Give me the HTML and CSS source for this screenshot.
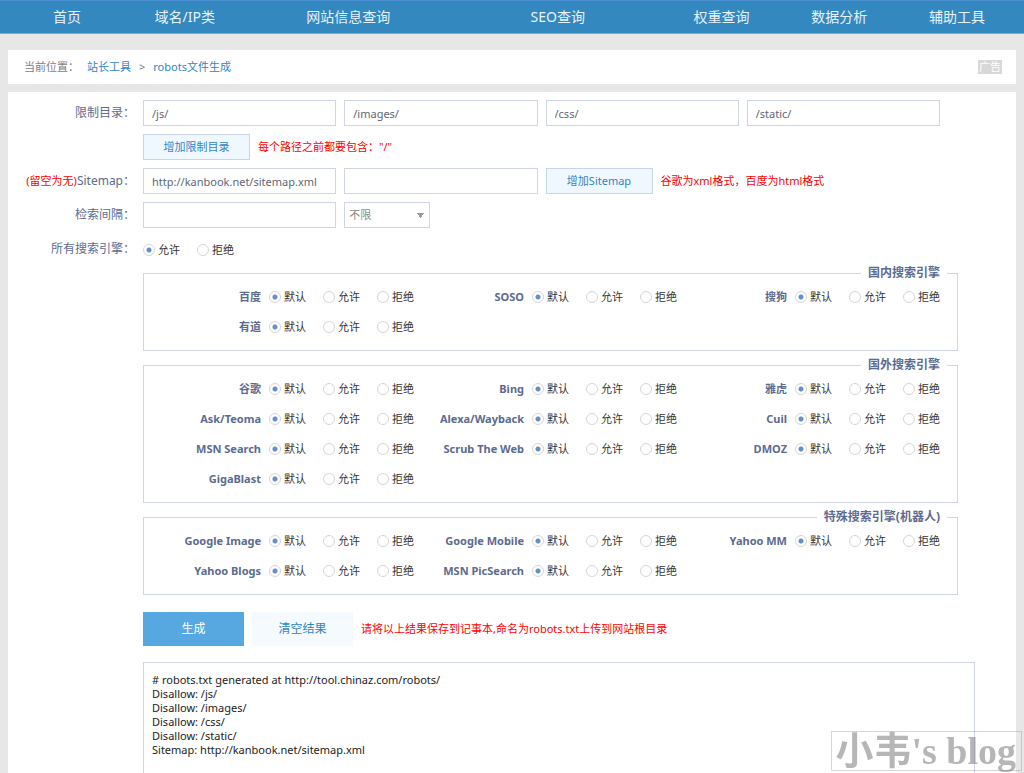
FILE: index.html
```html
<!DOCTYPE html>
<html lang="zh-CN">
<head>
<meta charset="utf-8">
<title>robots文件生成</title>
<link rel="stylesheet" href="styles.css">
</head>
<body>
<nav class="nav">
  <a href="#">首页</a>
  <a href="#">域名/IP类</a>
  <a href="#">网站信息查询</a>
  <a href="#">SEO查询</a>
  <a href="#">权重查询</a>
  <a href="#">数据分析</a>
  <a href="#">辅助工具</a>
</nav>
<div class="crumbs">
  <span>当前位置：</span>
  <a href="#">站长工具</a>
  <span class="sep">&gt;</span>
  <a href="#">robots文件生成</a>
  <span class="ad">广告</span>
</div>
<form class="panel">
  <div class="row">
    <label class="caption" for="dir1">限制目录：</label>
    <div class="fields">
      <input class="field" type="text" id="dir1" value="/js/">
      <input class="field" type="text" aria-label="限制目录 2" value="/images/">
      <input class="field" type="text" aria-label="限制目录 3" value="/css/">
      <input class="field" type="text" aria-label="限制目录 4" value="/static/">
    </div>
  </div>
  <div class="row">
    <span class="caption"></span>
    <div class="inline">
      <button class="add" type="button">增加限制目录</button>
      <span class="note">每个路径之前都要包含："/"</span>
    </div>
  </div>
  <div class="row">
    <label class="caption" for="map1"><span class="note">(留空为无)</span>Sitemap：</label>
    <div class="fields">
      <input class="field" type="text" id="map1" value="http://kanbook.net/sitemap.xml">
      <input class="field" type="text" aria-label="Sitemap 2">
      <div class="inline wide">
        <button class="add" type="button">增加Sitemap</button>
        <span class="note">谷歌为xml格式，百度为html格式</span>
      </div>
    </div>
  </div>
  <div class="row">
    <label class="caption" for="delay">检索间隔：</label>
    <div class="fields">
      <input class="field" type="text" id="delay">
      <select class="unit" aria-label="间隔单位"><option>不限</option></select>
    </div>
  </div>
  <div class="row">
    <span class="caption" id="all">所有搜索引擎：</span>
    <div class="choices all" role="radiogroup" aria-labelledby="all">
      <label><input type="radio" name="all" checked>允许</label>
      <label><input type="radio" name="all">拒绝</label>
    </div>
  </div>

  <div class="content">
    <fieldset class="group">
      <legend>国内搜索引擎</legend>
      <div class="engines">
        <div class="engine"><b>百度</b><div class="choices"><label><input type="radio" name="baidu" checked>默认</label><label><input type="radio" name="baidu">允许</label><label><input type="radio" name="baidu">拒绝</label></div></div>
        <div class="engine"><b>SOSO</b><div class="choices"><label><input type="radio" name="soso" checked>默认</label><label><input type="radio" name="soso">允许</label><label><input type="radio" name="soso">拒绝</label></div></div>
        <div class="engine"><b>搜狗</b><div class="choices"><label><input type="radio" name="sogou" checked>默认</label><label><input type="radio" name="sogou">允许</label><label><input type="radio" name="sogou">拒绝</label></div></div>
        <div class="engine"><b>有道</b><div class="choices"><label><input type="radio" name="youdao" checked>默认</label><label><input type="radio" name="youdao">允许</label><label><input type="radio" name="youdao">拒绝</label></div></div>
      </div>
    </fieldset>
    <fieldset class="group">
      <legend>国外搜索引擎</legend>
      <div class="engines">
        <div class="engine"><b>谷歌</b><div class="choices"><label><input type="radio" name="google" checked>默认</label><label><input type="radio" name="google">允许</label><label><input type="radio" name="google">拒绝</label></div></div>
        <div class="engine"><b>Bing</b><div class="choices"><label><input type="radio" name="bing" checked>默认</label><label><input type="radio" name="bing">允许</label><label><input type="radio" name="bing">拒绝</label></div></div>
        <div class="engine"><b>雅虎</b><div class="choices"><label><input type="radio" name="yahoo" checked>默认</label><label><input type="radio" name="yahoo">允许</label><label><input type="radio" name="yahoo">拒绝</label></div></div>
        <div class="engine"><b>Ask/Teoma</b><div class="choices"><label><input type="radio" name="ask" checked>默认</label><label><input type="radio" name="ask">允许</label><label><input type="radio" name="ask">拒绝</label></div></div>
        <div class="engine"><b>Alexa/Wayback</b><div class="choices"><label><input type="radio" name="alexa" checked>默认</label><label><input type="radio" name="alexa">允许</label><label><input type="radio" name="alexa">拒绝</label></div></div>
        <div class="engine"><b>Cuil</b><div class="choices"><label><input type="radio" name="cuil" checked>默认</label><label><input type="radio" name="cuil">允许</label><label><input type="radio" name="cuil">拒绝</label></div></div>
        <div class="engine"><b>MSN Search</b><div class="choices"><label><input type="radio" name="msn" checked>默认</label><label><input type="radio" name="msn">允许</label><label><input type="radio" name="msn">拒绝</label></div></div>
        <div class="engine"><b>Scrub The Web</b><div class="choices"><label><input type="radio" name="scrub" checked>默认</label><label><input type="radio" name="scrub">允许</label><label><input type="radio" name="scrub">拒绝</label></div></div>
        <div class="engine"><b>DMOZ</b><div class="choices"><label><input type="radio" name="dmoz" checked>默认</label><label><input type="radio" name="dmoz">允许</label><label><input type="radio" name="dmoz">拒绝</label></div></div>
        <div class="engine"><b>GigaBlast</b><div class="choices"><label><input type="radio" name="giga" checked>默认</label><label><input type="radio" name="giga">允许</label><label><input type="radio" name="giga">拒绝</label></div></div>
      </div>
    </fieldset>
    <fieldset class="group">
      <legend>特殊搜索引擎(机器人)</legend>
      <div class="engines">
        <div class="engine"><b>Google Image</b><div class="choices"><label><input type="radio" name="gimage" checked>默认</label><label><input type="radio" name="gimage">允许</label><label><input type="radio" name="gimage">拒绝</label></div></div>
        <div class="engine"><b>Google Mobile</b><div class="choices"><label><input type="radio" name="gmobile" checked>默认</label><label><input type="radio" name="gmobile">允许</label><label><input type="radio" name="gmobile">拒绝</label></div></div>
        <div class="engine"><b>Yahoo MM</b><div class="choices"><label><input type="radio" name="ymm" checked>默认</label><label><input type="radio" name="ymm">允许</label><label><input type="radio" name="ymm">拒绝</label></div></div>
        <div class="engine"><b>Yahoo Blogs</b><div class="choices"><label><input type="radio" name="yblogs" checked>默认</label><label><input type="radio" name="yblogs">允许</label><label><input type="radio" name="yblogs">拒绝</label></div></div>
        <div class="engine"><b>MSN PicSearch</b><div class="choices"><label><input type="radio" name="msnpic" checked>默认</label><label><input type="radio" name="msnpic">允许</label><label><input type="radio" name="msnpic">拒绝</label></div></div>
      </div>
    </fieldset>
    <div class="inline actions">
      <button class="action primary" type="button">生成</button>
      <button class="action" type="reset">清空结果</button>
      <span class="note">请将以上结果保存到记事本,命名为robots.txt上传到网站根目录</span>
    </div>
    <textarea class="result" aria-label="生成结果">
# robots.txt generated at http://tool.chinaz.com/robots/
Disallow: /js/
Disallow: /images/
Disallow: /css/
Disallow: /static/
Sitemap: http://kanbook.net/sitemap.xml</textarea>
  </div>
</form>
<div class="watermark">小韦's blog</div>
</body>
</html>
```
FILE: styles.css
```css
* {
  box-sizing: border-box;
}

body {
  margin: 0;
  min-height: 100vh;
  display: flex;
  flex-direction: column;
  background: #e7e7e7;
  color: #5c6b8f;
  font: 11px/16px "Noto Sans", "Noto Sans CJK SC", sans-serif;
}

a {
  color: #2f86c5;
  text-decoration: none;
}

input,
select,
button,
textarea {
  font: inherit;
  margin: 0;
}

.nav {
  display: grid;
  grid-template-columns: 9fr 9fr 16fr 16fr 9fr 9fr 9fr;
  padding: 0 8px;
  background: #3388bf;
  border-top: 1px solid #4a90d2;
  border-bottom: 1px solid #79a9d0;
}

.nav a {
  color: #e8f2f9;
  font-size: 14px;
  line-height: 32px;
  text-align: center;
}

.crumbs {
  display: flex;
  align-items: center;
  height: 34px;
  margin: 16px 8px 8px;
  padding: 0 14px 0 16px;
  background: #fff;
  color: #7c8087;
}

.crumbs a:first-of-type {
  margin-left: 8px;
}

.sep {
  margin: 0 8px;
}

.ad {
  margin-left: auto;
  padding: 0 1px;
  background: #d8d8d8;
  color: #fff;
  line-height: 14px;
}

.panel {
  flex: 1;
  display: flex;
  flex-direction: column;
  gap: 8px;
  margin: 0 8px;
  padding-top: 8px;
  background: #fff;
}

.row {
  display: grid;
  grid-template-columns: 127px 1fr;
  column-gap: 8px;
  padding-right: 76px;
}

.caption {
  font-size: 12px;
  line-height: 26px;
  text-align: right;
  white-space: nowrap;
}

.fields {
  display: grid;
  grid-template-columns: repeat(4, 1fr);
  gap: 8px;
}

.field {
  width: 100%;
  height: 26px;
  padding: 0 8px;
  border: 1px solid #cfd5e6;
  background: #fff;
  color: #5f6675;
}

.inline {
  display: flex;
  align-items: center;
  gap: 8px;
}

.wide {
  grid-column: 3 / 5;
}

.add {
  width: 107px;
  height: 26px;
  padding: 0;
  border: 1px solid #c8d5e8;
  background: #f0f8ff;
  color: #2f86c5;
}

.note {
  color: #f00;
  font-size: 11px;
  white-space: nowrap;
}

.unit {
  appearance: none;
  width: 86px;
  height: 26px;
  padding: 0 4px;
  border: 1px solid #cfd5e6;
  border-radius: 0;
  color: #8a8a8a;
  background: #fff conic-gradient(from -37deg at 50% 100%, #999 74deg, transparent 0) no-repeat right 5px center / 7px 5px;
}

.choices {
  display: flex;
  gap: 17px;
}

.choices label {
  display: flex;
  align-items: center;
  gap: 3px;
  color: #333;
  white-space: nowrap;
}

.all {
  height: 28px;
}

.choices input {
  appearance: none;
  width: 12px;
  height: 12px;
  border: 1px solid #d6d6d6;
  border-radius: 50%;
  background: #fff;
}

.choices input:checked {
  background: radial-gradient(circle, #6290c8 2px, #fff 3px);
}

.content {
  flex: 1;
  display: flex;
  flex-direction: column;
  padding: 0 41px 0 135px;
  margin-top: -7px;
}

.group {
  min-width: 0;
  margin: 0 17px 6px 0;
  padding: 1px 17px 8px 7px;
  border: 1px solid #cfd5e6;
}

.group legend {
  margin: 0 -7px 0 auto;
  padding: 0 7px;
  font-size: 12px;
  font-weight: 700;
}

.engines {
  display: grid;
  grid-template-columns: repeat(3, 1fr);
  grid-auto-rows: 30px;
}

.engine {
  display: flex;
  align-items: center;
  justify-content: flex-end;
  gap: 8px;
  white-space: nowrap;
}

.actions {
  margin: 11px 0 16px;
}

.action {
  width: 101px;
  height: 34px;
  border: 0;
  background: #f5faff;
  color: #2f86c5;
  font-size: 12px;
}

.primary {
  background: #57a8e1;
  color: #fff;
}

.result {
  flex: 1;
  width: 100%;
  min-height: 110px;
  padding: 10px 8px 0;
  border: 1px solid #cfd5e6;
  border-bottom: 0;
  background: #fff;
  color: #222;
  line-height: 14px;
  resize: none;
}

.watermark {
  position: fixed;
  right: 2px;
  bottom: 2px;
  padding: 0 5px 0 3px;
  border: 1px solid rgba(120, 120, 120, 0.3);
  color: rgba(110, 110, 110, 0.5);
  font: 700 38px/38px "Liberation Serif", "Noto Sans CJK SC", serif;
  white-space: nowrap;
}
```
